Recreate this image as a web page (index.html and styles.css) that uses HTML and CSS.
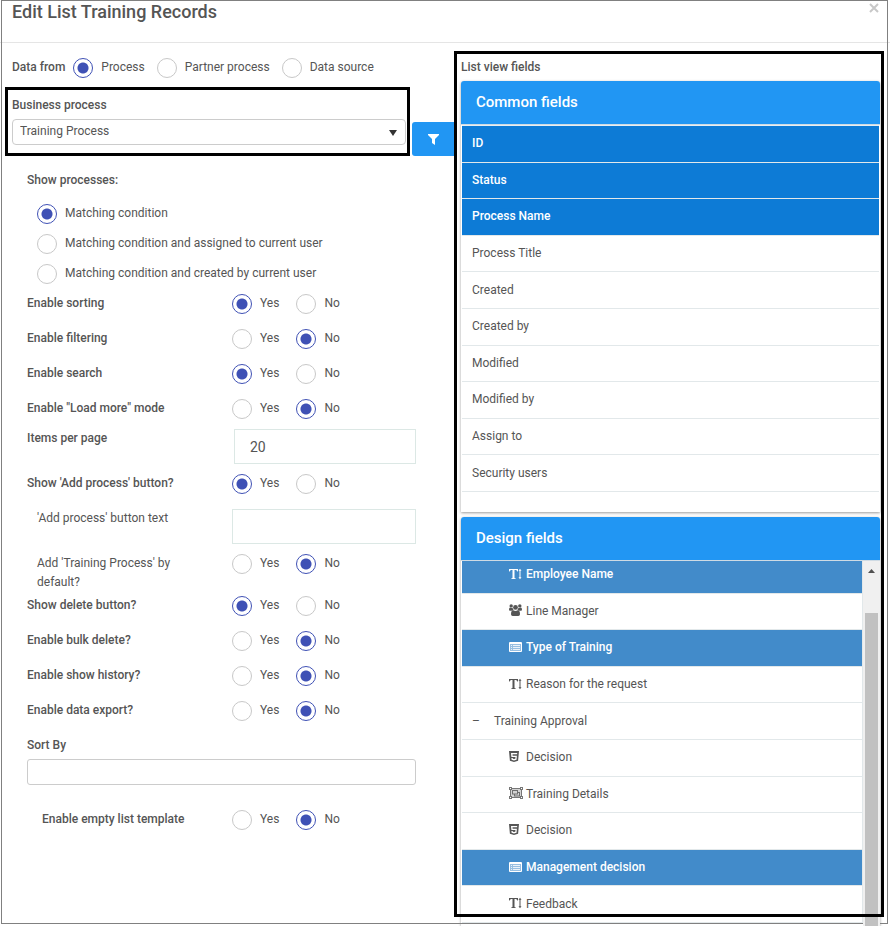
FILE: index.html
```html
<!DOCTYPE html>
<html lang="en">
<head>
<meta charset="utf-8">
<title>Edit List Training Records</title>
<link rel="stylesheet" href="styles.css">
</head>
<body>
<svg class="sprite" aria-hidden="true">
  <symbol id="i-text" viewBox="0 0 13 12">
    <path d="M0 1h9v2.500h-.7q-.2-1.500-1.500-1.500h-1.300v7.800q0 .7 1.300.7v.5h-4.600v-.5q1.300 0 1.300-.7v-7.800h-1.300q-1.300 0-1.500 1.500h-.7z"/>
    <path d="M11 .8l1.500 2h-1v6.400h1l-1.500 2-1.500-2h1v-6.400h-1z"/>
  </symbol>
  <symbol id="i-users" viewBox="0 0 13 12">
    <circle cx="2.200" cy="1.900" r="1.700"/><circle cx="10.800" cy="1.900" r="1.700"/><circle cx="6.500" cy="3.400" r="2.400"/>
    <path d="M0 5.800q0-2.200 1.300-2.200 1 .6 2.300.1.200 1.400 1 2.200-1.300 0-2 .8h-1.600q-1-.1-1-.9zM13 5.800q0-2.200-1.300-2.200-1 .6-2.300.1-.2 1.400-1 2.200 1.300 0 2 .8h1.600q1-.1 1-.9zM2 10.200q0-3.900 2.300-3.900 2.200 1.300 4.400 0 2.300 0 2.300 3.900 0 1.800-1.700 1.800h-5.600q-1.700 0-1.700-1.800z"/>
  </symbol>
  <symbol id="i-list" viewBox="0 0 13 11">
    <path fill-rule="evenodd" d="M1 1h11q1 0 1 1v8q0 1-1 1h-11q-1 0-1-1v-8q0-1 1-1zM1 3v7h11v-7z"/>
    <path opacity=".45" d="M1 3h11v7h-11z"/>
    <path opacity=".8" d="M2 4h1v1h-1zM4 4h7v1h-7zM2 6h1v1h-1zM4 6h7v1h-7zM2 8h1v1h-1zM4 8h7v1h-7z"/>
  </symbol>
  <symbol id="i-shield" viewBox="0 0 10 11">
    <path fill-rule="evenodd" d="M0 0h10l-.9 9.700-4.100 1.300-4.100-1.300zM2 2l.4 4h4.100l-.2 1.700-1.300.4-1.200-.4-.1-.7h-1.300l.2 1.700 2.400.8 2.500-.8.4-4h-4.300l-.1-1.400h4.600l.1-1.300z"/>
  </symbol>
  <symbol id="i-group" viewBox="0 0 14 12">
    <path opacity=".8" fill-rule="evenodd" d="M0 0h3v1h8v-1h3v3h-1v6h1v3h-3v-1h-8v1h-3v-3h1v-6h-1zM3 2v1h-1v6h1v1h8v-1h1v-6h-1v-1zM3 3h6v2h2v4.500h-6v-2h-2zM4 4v2.500h4v-2.500zM9 6v1.500h-3v1h4v-2.500zM1 1v1h1v-1zM12 1v1h1v-1zM1 10v1h1v-1zM12 10v1h1v-1z"/>
    <path opacity=".25" d="M2 2h10v8h-10z"/>
  </symbol>
</svg>

<main class="dialog">
  <header class="dialog-header">
    <h1>Edit List Training Records</h1>
    <button class="close" type="button" aria-label="Close"><svg width="10" height="10" viewBox="0 0 10 10"><path d="M1 1l8 8M9 1l-8 8"/></svg></button>
  </header>

  <div class="dialog-body">
    <form class="settings">
      <div class="source" role="radiogroup" aria-labelledby="source-label">
        <b id="source-label">Data from</b>
        <label class="radio"><input type="radio" name="source" checked>Process</label>
        <label class="radio"><input type="radio" name="source">Partner process</label>
        <label class="radio"><input type="radio" name="source">Data source</label>
      </div>

      <div class="process">
        <div class="process-box">
          <label for="process">Business process</label>
          <div class="select-wrap">
            <select id="process"><option>Training Process</option></select>
            <svg width="8" height="6" viewBox="0 0 8 6" aria-hidden="true"><path d="M0 0h8l-4 6z"/></svg>
          </div>
        </div>
        <button class="filter" type="button" aria-label="Filter"><svg width="11" height="11" viewBox="0 0 11 11"><path d="M0 0h11v1l-4 4v6l-3-2v-4l-4-4z"/></svg></button>
      </div>

      <div class="options">
        <b class="group-title" id="show-label">Show processes:</b>
        <div class="stack" role="radiogroup" aria-labelledby="show-label">
          <label class="radio"><input type="radio" name="show" checked>Matching condition</label>
          <label class="radio"><input type="radio" name="show">Matching condition and assigned to current user</label>
          <label class="radio"><input type="radio" name="show">Matching condition and created by current user</label>
        </div>

        <div class="row"><b>Enable sorting</b><div class="choice"><label class="radio"><input type="radio" name="sorting" checked>Yes</label><label class="radio"><input type="radio" name="sorting">No</label></div></div>
        <div class="row"><b>Enable filtering</b><div class="choice"><label class="radio"><input type="radio" name="filtering">Yes</label><label class="radio"><input type="radio" name="filtering" checked>No</label></div></div>
        <div class="row"><b>Enable search</b><div class="choice"><label class="radio"><input type="radio" name="search" checked>Yes</label><label class="radio"><input type="radio" name="search">No</label></div></div>
        <div class="row tight"><b>Enable "Load more" mode</b><div class="choice"><label class="radio"><input type="radio" name="more">Yes</label><label class="radio"><input type="radio" name="more" checked>No</label></div></div>
        <div class="row tight"><label class="strong" for="per-page">Items per page</label><input class="field number" id="per-page" type="text" value="20"></div>
        <div class="row"><b>Show 'Add process' button?</b><div class="choice"><label class="radio"><input type="radio" name="add" checked>Yes</label><label class="radio"><input type="radio" name="add">No</label></div></div>
        <div class="row tight sub"><label for="add-text">'Add process' button text</label><input class="field" id="add-text" type="text"></div>
        <div class="row wrapped sub"><span>Add 'Training Process' by default?</span><div class="choice"><label class="radio"><input type="radio" name="default">Yes</label><label class="radio"><input type="radio" name="default" checked>No</label></div></div>
        <div class="row"><b>Show delete button?</b><div class="choice"><label class="radio"><input type="radio" name="delete" checked>Yes</label><label class="radio"><input type="radio" name="delete">No</label></div></div>
        <div class="row"><b>Enable bulk delete?</b><div class="choice"><label class="radio"><input type="radio" name="bulk">Yes</label><label class="radio"><input type="radio" name="bulk" checked>No</label></div></div>
        <div class="row"><b>Enable show history?</b><div class="choice"><label class="radio"><input type="radio" name="history">Yes</label><label class="radio"><input type="radio" name="history" checked>No</label></div></div>
        <div class="row"><b>Enable data export?</b><div class="choice"><label class="radio"><input type="radio" name="export">Yes</label><label class="radio"><input type="radio" name="export" checked>No</label></div></div>
        <div class="sort"><label class="strong" for="sort">Sort By</label><input id="sort" type="text"></div>
        <div class="row template"><b>Enable empty list template</b><div class="choice"><label class="radio"><input type="radio" name="template">Yes</label><label class="radio"><input type="radio" name="template" checked>No</label></div></div>
      </div>
    </form>

    <section class="fields">
      <b class="fields-title">List view fields</b>
      <div class="panel common">
        <h2>Common fields</h2>
        <ul class="list">
          <li class="on">ID</li>
          <li class="on">Status</li>
          <li class="on">Process Name</li>
          <li>Process Title</li>
          <li>Created</li>
          <li>Created by</li>
          <li>Modified</li>
          <li>Modified by</li>
          <li>Assign to</li>
          <li>Security users</li>
        </ul>
      </div>
      <div class="panel design">
        <h2>Design fields</h2>
        <div class="viewport">
          <ul class="list tree">
            <li class="on"><svg class="icon"><use href="#i-text" width="13" height="12"/></svg>Employee Name</li>
            <li><svg class="icon"><use href="#i-users" width="13" height="12"/></svg>Line Manager</li>
            <li class="on"><svg class="icon"><use href="#i-list" width="13" height="11"/></svg>Type of Training</li>
            <li><svg class="icon"><use href="#i-text" width="13" height="12"/></svg>Reason for the request</li>
            <li class="branch"><span class="minus">–</span>Training Approval</li>
            <li><svg class="icon"><use href="#i-shield" width="10" height="11"/></svg>Decision</li>
            <li><svg class="icon"><use href="#i-group" width="14" height="12"/></svg>Training Details</li>
            <li><svg class="icon"><use href="#i-shield" width="10" height="11"/></svg>Decision</li>
            <li class="on"><svg class="icon"><use href="#i-list" width="13" height="11"/></svg>Management decision</li>
            <li><svg class="icon"><use href="#i-text" width="13" height="12"/></svg>Feedback</li>
          </ul>
          <div class="scrollbar" aria-hidden="true">
            <svg width="7" height="4" viewBox="0 0 7 4"><path d="M0 4l3.500-4 3.500 4z"/></svg>
            <div class="thumb"></div>
          </div>
        </div>
      </div>
    </section>
  </div>
</main>
</body>
</html>
```
FILE: styles.css
```css
* { box-sizing: border-box; }

body {
  margin: 0;
  background: #fff;
  color: #555;
  font: 12px/19px Roboto, "Liberation Sans", sans-serif;
}

input, select, button { font: inherit; color: inherit; margin: 0; }
h1, h2, ul { margin: 0; padding: 0; }
b, .strong { font-weight: 500; }
.sprite { position: absolute; width: 0; height: 0; }

.dialog {
  position: relative;
  display: flex;
  flex-direction: column;
  height: 100vh;
  overflow: hidden;
}

/* window outline */
.dialog::after {
  content: "";
  position: absolute;
  inset: 0 2px 2px 1px;
  border: 1px solid #808080;
  z-index: 1;
  pointer-events: none;
}

.dialog-header {
  display: flex;
  justify-content: space-between;
  align-items: flex-start;
  height: 43px;
  padding: 0 10px 0 12px;
  border-bottom: 1px solid #e5e5e5;
}
.dialog-header h1 { font-size: 18px; line-height: 24px; font-weight: 500; }

.close {
  display: flex;
  padding: 3px 1px;
  border: 0;
  background: none;
}
.close path { stroke: #c8c8c8; stroke-width: 2; }

.dialog-body {
  flex: 1;
  min-height: 0;
  display: grid;
  grid-template-columns: minmax(0, 452fr) minmax(0, 430fr);
  grid-template-rows: minmax(0, 1fr);
  padding: 8px 6px 9px 2px;
}

/* radios */
.radio { display: flex; gap: 8px; height: 20px; white-space: nowrap; }
.radio input {
  appearance: none;
  flex: none;
  width: 20px;
  height: 20px;
  border: 1px solid #c8c8c8;
  border-radius: 50%;
  background: #fff;
}
.radio input:checked {
  border-color: #3f51b5;
  background: radial-gradient(circle, #3f51b5 5px, #fff 6px);
}

/* left side */
.source { display: flex; gap: 12px; padding: 7px 10px 9px; }
.source b { margin-right: -4px; }

.process { display: flex; align-items: flex-end; padding-left: 3px; gap: 2px; }
.process-box {
  flex: 1;
  height: 69px;
  padding: 6px 1px 0 4px;
  border: 3px solid #000;
}
.process-box label { display: block; margin-bottom: 4px; font-weight: 500; }
.select-wrap { position: relative; }
.select-wrap svg { position: absolute; right: 9px; top: 11px; fill: #333; pointer-events: none; }
.process select {
  appearance: none;
  display: block;
  width: 100%;
  height: 26px;
  padding: 0 7px 2px;
  border: 1px solid #ccc;
  border-radius: 4px;
  background: #fff;
}
.filter {
  display: flex;
  align-items: center;
  justify-content: center;
  width: 42px;
  height: 34px;
  padding: 0;
  border: 0;
  border-radius: 3px 0 0 3px;
  background: #2196f3;
}
.filter path { fill: #fff; }

.options { padding: 15px 38px 0 25px; }
.group-title { display: block; margin-bottom: 14px; }
.stack { display: grid; gap: 10px; padding: 0 0 10px 10px; }

.row { display: flex; align-items: flex-start; margin-bottom: 15px; }
.row > :first-child { flex: 0 0 205px; }
.row.tight { margin-bottom: 10px; }
.row.wrapped { margin-bottom: 4px; }
.sub > :first-child { padding: 0 30px 0 10px; }
.choice { display: flex; gap: 17px; }

.field {
  flex: 1;
  min-width: 0;
  height: 35px;
  padding: 0 15px;
  border: 1px solid #dce8e5;
  background: #fff;
  font-size: 14px;
}
.number { margin-left: 2px; }

.sort { display: grid; gap: 4px; margin-bottom: 25px; }
.sort input {
  width: 100%;
  height: 26px;
  padding: 0 7px;
  border: 1px solid #ccc;
  border-radius: 3px;
}
.template { padding-left: 15px; }
.template > :first-child { flex-basis: 190px; }

/* right side */
.fields {
  position: relative;
  display: flex;
  flex-direction: column;
  padding: 7px 4px 0 7px;
}
.fields::after {
  content: "";
  position: absolute;
  inset: 0;
  border: 3px solid #000;
  z-index: 3;
  pointer-events: none;
}
.fields-title { margin-bottom: 4px; }

.panel {
  background: #fff;
  border-radius: 3px 3px 0 0;
  box-shadow: 0 1px 3px rgba(0, 0, 0, .4);
}
.panel h2 {
  position: relative;
  height: 44px;
  padding: 0 15px;
  border-bottom: 1px solid #cfdbe4;
  border-radius: 3px 3px 0 0;
  background: #2196f3;
  color: #fff;
  font-size: 15px;
  line-height: 42px;
  font-weight: 500;
}
.common { padding-bottom: 20px; margin-bottom: 5px; }

.list {
  display: grid;
  grid-template-rows: repeat(10, 1fr);
  height: 367px;
  margin: 0 1px;
  list-style: none;
}
.list li {
  display: flex;
  align-items: center;
  padding: 0 10px;
  border-bottom: 1px solid #e2e8ea;
}
.list .on { background: #0d7bd6; color: #fff; font-weight: 500; }
.common .list { border-top: 1px solid #e8eef2; }

.design {
  flex: 1;
  min-height: 0;
  display: flex;
  flex-direction: column;
  margin-bottom: -9px;
}
.design h2 { flex: none; }
.viewport { flex: 1; min-height: 0; display: flex; overflow: hidden; }
.tree { flex: 1; height: 366px; margin: -4px 0 0 1px; border-right: 1px solid #e2e8ea; }
.tree li { padding-left: 47px; }
.tree .branch { padding-left: 10px; }
.tree .on { background: #428bca; }
.minus { width: 22px; }
.icon { width: 14px; height: 12px; margin: 0 3px 2px 0; fill: currentColor; }

.scrollbar {
  position: relative;
  z-index: 2;
  display: flex;
  flex-direction: column;
  align-items: center;
  width: 17px;
  padding-top: 8px;
  background: #f0f0f0;
}
.scrollbar path { fill: #505050; }
.thumb { flex: 1; width: 13px; margin-top: 40px; background: #c1c1c1; }
```
